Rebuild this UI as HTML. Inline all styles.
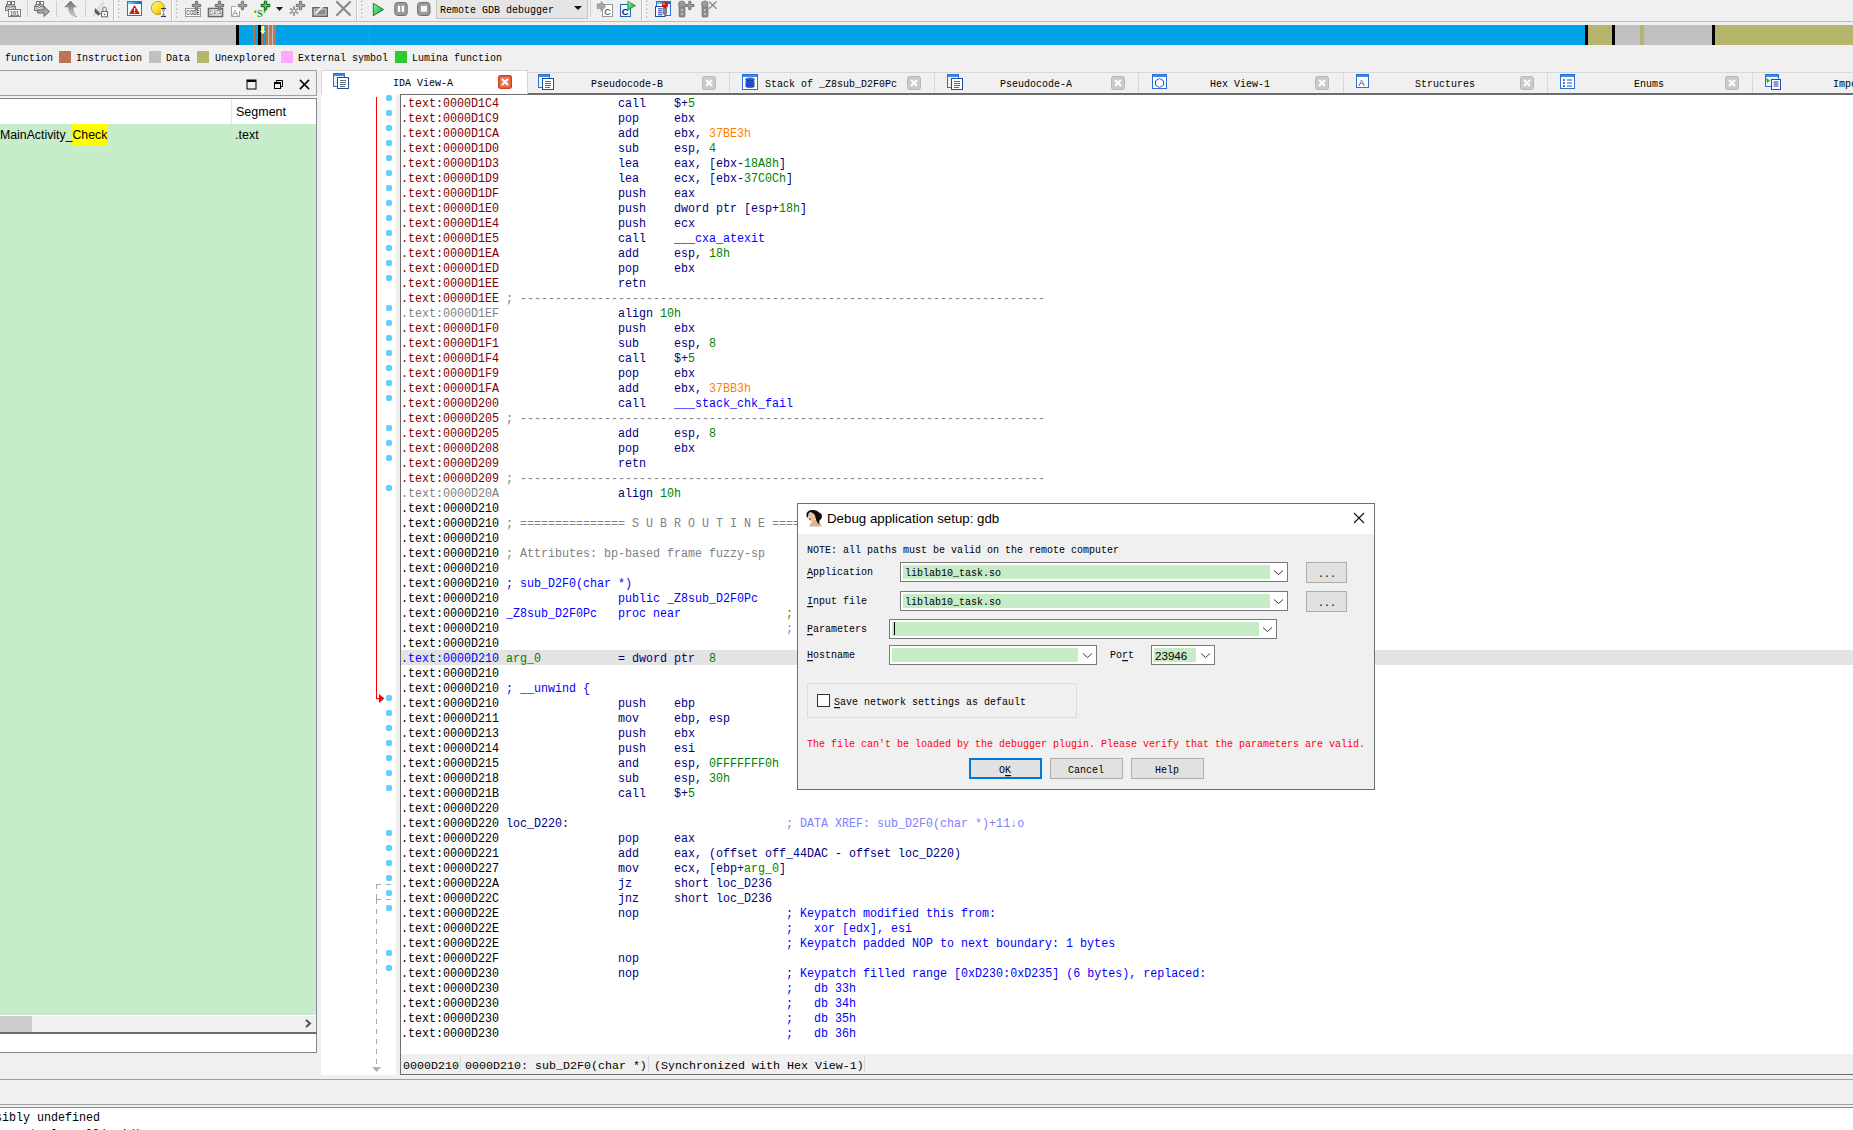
<!DOCTYPE html><html><head><meta charset="utf-8"><style>
*{box-sizing:border-box}
html,body{margin:0;padding:0}
body{width:1853px;height:1130px;overflow:hidden;background:#f0f0f0;position:relative;font-family:'Liberation Sans', sans-serif}
.a{position:absolute}
.ln{position:absolute;left:401.4px;height:15px;line-height:15px;font-family:'Liberation Mono', monospace;font-size:12px;white-space:pre;color:#000;transform:scaleX(0.97222);transform-origin:0 0}
.m10{font-family:'Liberation Mono', monospace;font-size:10px;white-space:pre;position:absolute;line-height:12px;transform:scaleY(1.15);transform-origin:0 9.5px}
.tab{position:absolute;top:72px;height:22px}
.tabtxt{position:absolute;top:78px;font-family:'Liberation Mono', monospace;font-size:10px;line-height:12px;white-space:pre;color:#000;transform:scaleY(1.15);transform-origin:0 9.5px}
.cls{position:absolute;top:75px;width:14px;height:14px;background:#c8c8c8;border:1px solid #b4b4b4;border-radius:2px}
.st{font-size:11.667px;transform:none}
.dot{position:absolute;left:386px;width:6px;height:6px;background:#5fcfff;border-radius:2px}
</style></head><body>
<div class="a" style="left:0;top:21px;width:1853px;height:1px;background:#bdbdbd"></div>
<svg class="a" style="left:0;top:0" width="720" height="21" viewBox="0 0 720 21"><rect x="113" y="0" width="1" height="21" fill="#c4c4c4"/><rect x="114" y="0" width="1" height="21" fill="#fff"/><rect x="171" y="0" width="1" height="21" fill="#c4c4c4"/><rect x="172" y="0" width="1" height="21" fill="#fff"/><rect x="356" y="0" width="1" height="21" fill="#c4c4c4"/><rect x="357" y="0" width="1" height="21" fill="#fff"/><rect x="641" y="0" width="1" height="21" fill="#c4c4c4"/><rect x="642" y="0" width="1" height="21" fill="#fff"/><rect x="27" y="1" width="1" height="16" fill="#cfcfcf"/><rect x="56" y="1" width="1" height="16" fill="#cfcfcf"/><rect x="85" y="1" width="1" height="16" fill="#cfcfcf"/><rect x="590" y="1" width="1" height="16" fill="#cfcfcf"/><path d="M119.5 0.5 L118 2.0" stroke="#a0a0a0" stroke-width="1"/><rect x="119" y="1.5" width="1" height="1" fill="#fff"/><path d="M119.5 4.5 L118 6.0" stroke="#a0a0a0" stroke-width="1"/><rect x="119" y="5.5" width="1" height="1" fill="#fff"/><path d="M119.5 8.5 L118 10.0" stroke="#a0a0a0" stroke-width="1"/><rect x="119" y="9.5" width="1" height="1" fill="#fff"/><path d="M119.5 12.5 L118 14.0" stroke="#a0a0a0" stroke-width="1"/><rect x="119" y="13.5" width="1" height="1" fill="#fff"/><path d="M119.5 16.5 L118 18.0" stroke="#a0a0a0" stroke-width="1"/><rect x="119" y="17.5" width="1" height="1" fill="#fff"/><path d="M177.5 0.5 L176 2.0" stroke="#a0a0a0" stroke-width="1"/><rect x="177" y="1.5" width="1" height="1" fill="#fff"/><path d="M177.5 4.5 L176 6.0" stroke="#a0a0a0" stroke-width="1"/><rect x="177" y="5.5" width="1" height="1" fill="#fff"/><path d="M177.5 8.5 L176 10.0" stroke="#a0a0a0" stroke-width="1"/><rect x="177" y="9.5" width="1" height="1" fill="#fff"/><path d="M177.5 12.5 L176 14.0" stroke="#a0a0a0" stroke-width="1"/><rect x="177" y="13.5" width="1" height="1" fill="#fff"/><path d="M177.5 16.5 L176 18.0" stroke="#a0a0a0" stroke-width="1"/><rect x="177" y="17.5" width="1" height="1" fill="#fff"/><path d="M362.5 0.5 L361 2.0" stroke="#a0a0a0" stroke-width="1"/><rect x="362" y="1.5" width="1" height="1" fill="#fff"/><path d="M362.5 4.5 L361 6.0" stroke="#a0a0a0" stroke-width="1"/><rect x="362" y="5.5" width="1" height="1" fill="#fff"/><path d="M362.5 8.5 L361 10.0" stroke="#a0a0a0" stroke-width="1"/><rect x="362" y="9.5" width="1" height="1" fill="#fff"/><path d="M362.5 12.5 L361 14.0" stroke="#a0a0a0" stroke-width="1"/><rect x="362" y="13.5" width="1" height="1" fill="#fff"/><path d="M362.5 16.5 L361 18.0" stroke="#a0a0a0" stroke-width="1"/><rect x="362" y="17.5" width="1" height="1" fill="#fff"/><path d="M647.5 0.5 L646 2.0" stroke="#a0a0a0" stroke-width="1"/><rect x="647" y="1.5" width="1" height="1" fill="#fff"/><path d="M647.5 4.5 L646 6.0" stroke="#a0a0a0" stroke-width="1"/><rect x="647" y="5.5" width="1" height="1" fill="#fff"/><path d="M647.5 8.5 L646 10.0" stroke="#a0a0a0" stroke-width="1"/><rect x="647" y="9.5" width="1" height="1" fill="#fff"/><path d="M647.5 12.5 L646 14.0" stroke="#a0a0a0" stroke-width="1"/><rect x="647" y="13.5" width="1" height="1" fill="#fff"/><path d="M647.5 16.5 L646 18.0" stroke="#a0a0a0" stroke-width="1"/><rect x="647" y="17.5" width="1" height="1" fill="#fff"/><rect x="7.5" y="1.5" width="3" height="3" fill="#fff" stroke="#7a7a7a"/><rect x="11.5" y="1.5" width="3" height="3" fill="#fff" stroke="#7a7a7a"/><rect x="6.5" y="4.5" width="4" height="2" fill="#c4c4c4" stroke="#7a7a7a"/><rect x="10.5" y="4.5" width="4" height="2" fill="#c4c4c4" stroke="#7a7a7a"/><rect x="5.5" y="6.5" width="5" height="4" fill="#c4c4c4" stroke="#7a7a7a"/><rect x="10.5" y="6.5" width="5" height="4" fill="#c4c4c4" stroke="#7a7a7a"/><rect x="10" y="6" width="1" height="1" fill="#fff"/><rect x="10" y="8" width="1" height="1" fill="#fff"/><rect x="8.5" y="9.5" width="12" height="7" fill="#fff" stroke="#7a7a7a"/><text x="10" y="15.6" font-family="Liberation Sans" font-weight="bold" font-size="6.5" fill="#555" textLength="9" lengthAdjust="spacingAndGlyphs">101</text><rect x="36.5" y="1.5" width="3" height="3" fill="#fff" stroke="#7a7a7a"/><rect x="40.5" y="1.5" width="3" height="3" fill="#fff" stroke="#7a7a7a"/><rect x="35.5" y="4.5" width="4" height="2" fill="#c4c4c4" stroke="#7a7a7a"/><rect x="39.5" y="4.5" width="4" height="2" fill="#c4c4c4" stroke="#7a7a7a"/><rect x="34.5" y="6.5" width="5" height="4" fill="#c4c4c4" stroke="#7a7a7a"/><rect x="39.5" y="6.5" width="5" height="4" fill="#c4c4c4" stroke="#7a7a7a"/><rect x="39" y="6" width="1" height="1" fill="#fff"/><rect x="39" y="8" width="1" height="1" fill="#fff"/><path d="M37.5 10 H44 V6.5 L49.5 11.5 L44 16.5 V13 H37.5Z" fill="#a8a8a8" stroke="#6e6e6e" stroke-width="1"/><defs><linearGradient id="ga" x1="0" y1="0" x2="0" y2="1"><stop offset="0" stop-color="#6a6a6a"/><stop offset="1" stop-color="#d8d8d8"/></linearGradient><linearGradient id="gg" x1="0" y1="0" x2="1" y2="1"><stop offset="0" stop-color="#7fff9f"/><stop offset="1" stop-color="#0a9a2a"/></linearGradient><linearGradient id="gy" x1="0" y1="0" x2="1" y2="1"><stop offset="0" stop-color="#fff7a0"/><stop offset="0.6" stop-color="#ffd820"/><stop offset="1" stop-color="#c08a00"/></linearGradient><linearGradient id="gb" x1="0" y1="0" x2="1" y2="0"><stop offset="0" stop-color="#5ee0ff"/><stop offset="1" stop-color="#2050d0"/></linearGradient></defs><path d="M70.5 1 L76.5 7 H73 C73 11 74 14.5 77 17 C71 16 68.5 12 68.5 7 H64.5Z" fill="url(#ga)" stroke="#5a5a5a" stroke-width="0.6" stroke-dasharray="1 1"/><path d="M92.5 16.5 L96 10 L103 1.5 L104 3 L99 12 Z" fill="#e4e4e4" stroke="#c8c8c8" stroke-width="0.6"/><path d="M95 8 L101 14 L98 15.5 L94.5 12 Z" fill="#5a5a5a"/><rect x="101.5" y="11.5" width="6" height="5.3" fill="#f4f4f4" stroke="#707070"/><path d="M102.8 11.5 V9 A1.7 2 0 0 1 106.2 9 V11.5" fill="none" stroke="#707070" stroke-width="1"/><rect x="104" y="14" width="1" height="1" fill="#333"/><rect x="127.5" y="1.5" width="14" height="14" fill="#f0ffff" stroke="#2a6ee0"/><rect x="128" y="2" width="13" height="2" fill="url(#gb)"/><rect x="128" y="4" width="13" height="0.6" fill="#fff"/><path d="M134.5 5 L140 14 H129Z" fill="#d81818"/><rect x="134" y="8" width="1.2" height="3.2" fill="#fff"/><rect x="134" y="12" width="1.2" height="1.2" fill="#fff"/><circle cx="158" cy="8" r="6.6" fill="url(#gy)" stroke="#b88a00" stroke-width="0.8"/><rect x="161" y="8" width="5" height="9" fill="#fff"/><rect x="161" y="8" width="5" height="1" fill="#1a3a7a"/><rect x="161" y="16" width="5" height="1" fill="#1a3a7a"/><path d="M162 9.5 H165 L163.5 12.5 L165 15.5 H162 L163.5 12.5Z" fill="#e07040" stroke="#6aa0e0" stroke-width="0.5"/><rect x="185.5" y="8.5" width="15" height="8" fill="#fff" stroke="#9a9a9a"/><text x="186.3" y="15.3" font-family="Liberation Sans" font-weight="bold" font-size="6.6" fill="#5a5a5a" textLength="13.4" lengthAdjust="spacingAndGlyphs">CODE</text><path d="M195.4 1.2999999999999998 H197.6 V4.4 H200.7 V6.6 H197.6 V9.7 H195.4 V6.6 H192.3 V4.4 H195.4Z" fill="#a0a0a0" stroke="#6a6a6a" stroke-width="1"/><rect x="208.5" y="8.5" width="14" height="8" fill="#fff" stroke="#6a6a6a" stroke-width="1.6"/><text x="209.6" y="15.3" font-family="Liberation Sans" font-weight="bold" font-size="6.6" fill="#888" textLength="12" lengthAdjust="spacingAndGlyphs">DATA</text><path d="M218.4 1.2999999999999998 H220.6 V4.4 H223.7 V6.6 H220.6 V9.7 H218.4 V6.6 H215.3 V4.4 H218.4Z" fill="#a0a0a0" stroke="#6a6a6a" stroke-width="1"/><path d="M239.5 11 V16.5 H231.5 V6.5 H236" fill="#fff" stroke="#a0a0a0"/><text x="232" y="15.5" font-family="Liberation Sans" font-size="9" fill="#777">A</text><path d="M241.4 1.2999999999999998 H243.6 V4.4 H246.7 V6.6 H243.6 V9.7 H241.4 V6.6 H238.3 V4.4 H241.4Z" fill="#a8a8a8" stroke="#707070" stroke-width="1"/><text x="253.5" y="16.8" font-family="Liberation Serif" font-weight="bold" font-size="10.5" fill="#2a9a1a">‘S’</text><path d="M264.3 1.2000000000000002 H266.7 V4.3 H269.8 V6.7 H266.7 V9.8 H264.3 V6.7 H261.2 V4.3 H264.3Z" fill="#30e040" stroke="#0a5a0a" stroke-width="1"/><path d="M276 7 H283 L279.5 11Z" fill="#1a1a1a"/><g stroke="#9a9a9a" stroke-width="2" stroke-linecap="round"><path d="M294 7 V15"/><path d="M290.5 9 L297.5 13"/><path d="M297.5 9 L290.5 13"/></g><circle cx="294" cy="11" r="1.2" fill="#eee"/><path d="M299.4 1.2999999999999998 H301.6 V4.4 H304.7 V6.6 H301.6 V9.7 H299.4 V6.6 H296.3 V4.4 H299.4Z" fill="#a8a8a8" stroke="#707070" stroke-width="1"/><rect x="313" y="7.8" width="14.2" height="8.4" fill="#fff" stroke="#666" stroke-width="1.6"/><rect x="314.5" y="9.3" width="11.2" height="5.4" fill="#8a8a8a"/><path d="M315.5 13.5 L327 2" stroke="#f8f8f8" stroke-width="2.2"/><path d="M315.5 13.5 L327 2" stroke="#b0b0b0" stroke-width="0.6" stroke-dasharray="1 1"/><path d="M337 2 L350 15 M350 2 L337 15" stroke="#8a8a8a" stroke-width="2.2" stroke-linecap="round"/><path d="M373.3 3.3 L383.5 9.5 L373.3 15.7Z" fill="url(#gg)" stroke="#0a5a10" stroke-width="0.8"/><rect x="394.8" y="2.5" width="12.4" height="13" rx="3" fill="#9a9a9a" stroke="#707070"/><rect x="397.8" y="5.8" width="2.4" height="6" fill="#fff"/><rect x="401.7" y="5.8" width="2.4" height="6" fill="#fff"/><rect x="417.6" y="2.5" width="12.4" height="13" rx="3" fill="#9a9a9a" stroke="#707070"/><rect x="420.8" y="5.8" width="6.2" height="6" fill="#f4f4f4"/><rect x="602.5" y="4.5" width="10" height="12" fill="#fff" stroke="#9a9a9a"/><text x="604.2" y="14.5" font-family="Liberation Sans" font-weight="bold" font-size="9" fill="#6a6a6a">C</text><path d="M597.2 4 H601 V1.2 L605.8 6.3 L601 11.4 V8.6 H597.2Z" fill="#a8a8a8" stroke="#555" stroke-width="0.6" stroke-dasharray="1 0.8"/><rect x="620.5" y="4.5" width="10" height="12" fill="#eef6ff" stroke="#2a60b0"/><text x="621.8" y="14.5" font-family="Liberation Sans" font-weight="bold" font-size="9.5" fill="#0a1a8a">C</text><path d="M627.8 1.2 L635.5 5.6 L627.8 10Z" fill="url(#gg)" stroke="#0a6a10" stroke-width="0.6"/><rect x="656.5" y="1.5" width="14" height="14" fill="#f0ffff" stroke="#2a6ee0"/><rect x="657" y="2" width="13" height="2" fill="url(#gb)"/><rect x="655.5" y="6.5" width="9.5" height="10" fill="#fff" stroke="#1a4a9a"/><path d="M658 8.8 H662.5 M658 10.8 H662.5 M658 12.8 H662.5 M658 14.8 H662.5" stroke="#0a1aa0" stroke-width="0.9"/><rect x="663.6" y="8" width="3" height="6" fill="#888" stroke="#333" stroke-width="0.5"/><circle cx="665" cy="5" r="3" fill="#e01010"/><circle cx="664" cy="4" r="1" fill="#ff9090"/><rect x="679" y="6" width="6" height="11" rx="1" fill="#8a8a8a" stroke="#6a6a6a" stroke-width="0.6"/><circle cx="681.8" cy="4.3" r="3.4" fill="#9a9a9a" stroke="#6a6a6a" stroke-width="0.6"/><circle cx="682" cy="10" r="1.3" fill="#b8b8b8"/><circle cx="682" cy="14" r="1.3" fill="#b8b8b8"/><rect x="702" y="6" width="6" height="11" rx="1" fill="#8a8a8a" stroke="#6a6a6a" stroke-width="0.6"/><circle cx="704.8" cy="4.3" r="3.4" fill="#9a9a9a" stroke="#6a6a6a" stroke-width="0.6"/><circle cx="705" cy="10" r="1.3" fill="#b8b8b8"/><circle cx="705" cy="14" r="1.3" fill="#b8b8b8"/><path d="M688.8 1.4000000000000004 H690.8 V4.5 H693.9 V6.5 H690.8 V9.6 H688.8 V6.5 H685.6999999999999 V4.5 H688.8Z" fill="#a8a8a8" stroke="#707070" stroke-width="1"/><path d="M709 1.5 L716.5 8.8 M716.5 1.5 L709 8.8" stroke="#8a8a8a" stroke-width="1.4"/></svg>
<div class="a" style="left:436px;top:0;width:152px;height:19px;background:#e5e5e5;border:1px solid #c4c4c4;border-top:none"></div>
<div class="m10" style="left:440px;top:5px;color:#000">Remote GDB debugger</div>
<svg class="a" style="left:574px;top:6px" width="9" height="6" viewBox="0 0 9 6"><path d="M0 0 H8 L4 4Z" fill="#111"/></svg>
<div class="a" style="left:0;top:25px;width:1853px;height:20px;background:#00a2e8"></div>
<div class="a" style="left:0px;top:25px;width:236px;height:20px;background:#c0c0c0"></div>
<div class="a" style="left:236px;top:25px;width:3px;height:20px;background:#000"></div>
<div class="a" style="left:253px;top:25px;width:2px;height:20px;background:#c07040"></div>
<div class="a" style="left:257px;top:25px;width:1px;height:20px;background:#c07040"></div>
<div class="a" style="left:258px;top:25px;width:3px;height:20px;background:#000"></div>
<div class="a" style="left:262px;top:25px;width:1px;height:20px;background:#c07040"></div>
<div class="a" style="left:266px;top:25px;width:2px;height:20px;background:#c07040"></div>
<div class="a" style="left:268px;top:25px;width:1px;height:20px;background:#c0c0c0"></div>
<div class="a" style="left:269px;top:25px;width:3px;height:20px;background:#bb7a50"></div>
<div class="a" style="left:272px;top:25px;width:1px;height:20px;background:#c0c0c0"></div>
<div class="a" style="left:273px;top:25px;width:3px;height:20px;background:#bb7a50"></div>
<div class="a" style="left:369px;top:25px;width:1px;height:20px;background:#b07850"></div>
<div class="a" style="left:1585px;top:25px;width:3px;height:20px;background:#000"></div>
<div class="a" style="left:1588px;top:25px;width:24px;height:20px;background:#b5b56b"></div>
<div class="a" style="left:1612px;top:25px;width:3px;height:20px;background:#000"></div>
<div class="a" style="left:1615px;top:25px;width:25px;height:20px;background:#c0c0c0"></div>
<div class="a" style="left:1640px;top:25px;width:4px;height:20px;background:#b5b56b"></div>
<div class="a" style="left:1644px;top:25px;width:68px;height:20px;background:#c0c0c0"></div>
<div class="a" style="left:1712px;top:25px;width:3px;height:20px;background:#000"></div>
<div class="a" style="left:1715px;top:25px;width:138px;height:20px;background:#b5b56b"></div>
<svg class="a" style="left:260px;top:26px" width="6" height="9" viewBox="0 0 6 9"><path d="M1.3 0 H4.3 V5 H5.5 L2.8 8.3 L0 5 H1.3Z" fill="#ffff80"/></svg>
<div class="m10" style="left:5px;top:53px;color:#000">function</div>
<div class="a" style="left:59px;top:51px;width:12px;height:12px;background:#bb7755"></div>
<div class="m10" style="left:76px;top:53px;color:#000">Instruction</div>
<div class="a" style="left:149px;top:51px;width:12px;height:12px;background:#c0c0c0"></div>
<div class="m10" style="left:166px;top:53px;color:#000">Data</div>
<div class="a" style="left:197px;top:51px;width:12px;height:12px;background:#b5b56b"></div>
<div class="m10" style="left:215px;top:53px;color:#000">Unexplored</div>
<div class="a" style="left:281px;top:51px;width:12px;height:12px;background:#ffa8ff"></div>
<div class="m10" style="left:298px;top:53px;color:#000">External symbol</div>
<div class="a" style="left:395px;top:51px;width:12px;height:12px;background:#30c830"></div>
<div class="m10" style="left:412px;top:53px;color:#000">Lumina function</div>
<div class="a" style="left:0;top:70px;width:317px;height:26px;border-top:1px solid #a0a0a0;border-bottom:1px solid #a0a0a0;border-right:1px solid #a0a0a0;background:#f0f0f0"></div>
<svg class="a" style="left:246px;top:79px" width="11" height="11" viewBox="0 0 11 11"><rect x="1" y="1" width="9" height="9" fill="none" stroke="#000" stroke-width="1"/><rect x="1" y="1" width="9" height="2" fill="#000"/></svg>
<svg class="a" style="left:273px;top:79px" width="11" height="11" viewBox="0 0 11 11"><rect x="1.5" y="3.5" width="6" height="6" fill="none" stroke="#000"/><rect x="1" y="3" width="7" height="2" fill="#000"/><path d="M3.5 3 V1.5 H9.5 V7.5 H8" fill="none" stroke="#000"/></svg>
<svg class="a" style="left:299px;top:79px" width="11" height="11" viewBox="0 0 11 11"><path d="M1.5 1.5 L9.5 9.5 M9.5 1.5 L1.5 9.5" stroke="#000" stroke-width="1.6" stroke-linecap="square"/></svg>
<div class="a" style="left:0;top:98px;width:317px;height:955px;border:1px solid #828790;border-left:none;background:#fff"></div>
<div class="a" style="left:0;top:124px;width:316px;height:891px;background:#c6ecc9"></div>
<div class="a" style="left:231px;top:99px;width:1px;height:25px;background:#e5e5e5"></div>
<div class="a" style="left:236px;top:104px;font:12.5px 'Liberation Sans';line-height:16px;color:#000">Segment</div>
<div class="a" style="left:72px;top:124px;width:35px;height:21px;background:#ffff00"></div>
<div class="a" style="left:0;top:127px;font:12.3px 'Liberation Sans';line-height:16px;color:#000">MainActivity_Check</div>
<div class="a" style="left:235px;top:127px;font:12.5px 'Liberation Sans';line-height:16px;color:#000">.text</div>
<div class="a" style="left:0;top:1016px;width:316px;height:16px;background:#f0f0f0"></div>
<div class="a" style="left:0;top:1016px;width:32px;height:16px;background:#cdcdcd"></div>
<div class="a" style="left:0;top:1032px;width:317px;height:2px;background:#6d6d6d"></div>

<svg class="a" style="left:304px;top:1019px" width="9" height="9"><path d="M2 1 L6 4.5 L2 8" stroke="#505050" stroke-width="2" fill="none"/></svg>
<div class="a" style="left:321px;top:72px;width:1532px;height:1px;background:#d8d8d8"></div>
<div class="a" style="left:321px;top:93px;width:1532px;height:2px;background:#6d6d6d"></div>
<div class="a" style="left:321px;top:70px;width:207px;height:25px;background:#fff;border:1px solid #d8d8d8;border-bottom:none"></div>
<svg class="a" style="left:333px;top:73px" width="16" height="16" viewBox="0 0 16 16"><rect x="0.5" y="0.5" width="11" height="13" fill="#e8f2ff" stroke="#2a70d8"/><rect x="1" y="1" width="10" height="2" fill="#3a8ae8"/><rect x="4.5" y="4.5" width="11" height="11" fill="#fff" stroke="#1f4f9a"/><path d="M7 7.5 H13 M7 9.5 H13 M7 11.5 H13 M7 13.5 H12" stroke="#345" stroke-width="0.8"/></svg>
<div class="tabtxt" style="left:393px;top:78px">IDA View-A</div>
<svg class="a" style="left:498px;top:75px" width="14" height="14" viewBox="0 0 14 14"><rect x="0.75" y="0.75" width="12.5" height="12.5" rx="2" fill="#e27850" stroke="#dc3a20" stroke-width="1.5"/><path d="M4 4 L10 10 M10 4 L4 10" stroke="#fff" stroke-width="2"/></svg>
<div class="a" style="left:729px;top:73px;width:1px;height:20px;background:#d8d8d8"></div>
<svg class="a" style="left:538px;top:74px" width="16" height="16" viewBox="0 0 16 16"><rect x="0.5" y="0.5" width="11" height="13" fill="#e8f2ff" stroke="#2a70d8"/><rect x="1" y="1" width="10" height="2" fill="#3a8ae8"/><rect x="4.5" y="4.5" width="11" height="11" fill="#fff" stroke="#1f4f9a"/><path d="M7 7.5 H13 M7 9.5 H13 M7 11.5 H13 M7 13.5 H12" stroke="#345" stroke-width="0.8"/></svg>
<div class="tabtxt" style="left:591px;top:79px">Pseudocode-B</div>
<svg class="a" style="left:702px;top:76px" width="14" height="14" viewBox="0 0 14 14"><rect x="0.5" y="0.5" width="13" height="13" rx="2" fill="#cacaca" stroke="#b8b8b8"/><path d="M4 4 L10 10 M10 4 L4 10" stroke="#fff" stroke-width="2"/></svg>
<div class="a" style="left:934px;top:73px;width:1px;height:20px;background:#d8d8d8"></div>
<svg class="a" style="left:742px;top:74px" width="16" height="16" viewBox="0 0 16 16"><rect x="0.5" y="0.5" width="15" height="15" fill="#fff" stroke="#2a70d8"/><rect x="1" y="1" width="14" height="2" fill="#3a8ae8"/><g fill="#2a5ae0" stroke="#0a2a9a" stroke-width="0.6"><ellipse cx="8" cy="12" rx="4.5" ry="1.5"/><ellipse cx="8" cy="9.8" rx="4.5" ry="1.5"/><ellipse cx="8" cy="7.6" rx="4.5" ry="1.5"/><ellipse cx="8" cy="5.4" rx="4.5" ry="1.5"/></g></svg>
<div class="tabtxt" style="left:765px;top:79px">Stack of _Z8sub_D2F0Pc</div>
<svg class="a" style="left:907px;top:76px" width="14" height="14" viewBox="0 0 14 14"><rect x="0.5" y="0.5" width="13" height="13" rx="2" fill="#cacaca" stroke="#b8b8b8"/><path d="M4 4 L10 10 M10 4 L4 10" stroke="#fff" stroke-width="2"/></svg>
<div class="a" style="left:1138px;top:73px;width:1px;height:20px;background:#d8d8d8"></div>
<svg class="a" style="left:947px;top:74px" width="16" height="16" viewBox="0 0 16 16"><rect x="0.5" y="0.5" width="11" height="13" fill="#e8f2ff" stroke="#2a70d8"/><rect x="1" y="1" width="10" height="2" fill="#3a8ae8"/><rect x="4.5" y="4.5" width="11" height="11" fill="#fff" stroke="#1f4f9a"/><path d="M7 7.5 H13 M7 9.5 H13 M7 11.5 H13 M7 13.5 H12" stroke="#345" stroke-width="0.8"/></svg>
<div class="tabtxt" style="left:1000px;top:79px">Pseudocode-A</div>
<svg class="a" style="left:1111px;top:76px" width="14" height="14" viewBox="0 0 14 14"><rect x="0.5" y="0.5" width="13" height="13" rx="2" fill="#cacaca" stroke="#b8b8b8"/><path d="M4 4 L10 10 M10 4 L4 10" stroke="#fff" stroke-width="2"/></svg>
<div class="a" style="left:1343px;top:73px;width:1px;height:20px;background:#d8d8d8"></div>
<svg class="a" style="left:1152px;top:74px" width="16" height="16" viewBox="0 0 16 16"><rect x="0.5" y="0.5" width="14" height="14" fill="#fff" stroke="#2a70d8"/><rect x="1" y="1" width="13" height="2" fill="#3a8ae8"/><path d="M7.5 4.5 L11.5 6.8 V11.2 L7.5 13.5 L3.5 11.2 V6.8Z" fill="none" stroke="#3050e0" stroke-width="1"/></svg>
<div class="tabtxt" style="left:1210px;top:79px">Hex View-1</div>
<svg class="a" style="left:1315px;top:76px" width="14" height="14" viewBox="0 0 14 14"><rect x="0.5" y="0.5" width="13" height="13" rx="2" fill="#cacaca" stroke="#b8b8b8"/><path d="M4 4 L10 10 M10 4 L4 10" stroke="#fff" stroke-width="2"/></svg>
<div class="a" style="left:1547px;top:73px;width:1px;height:20px;background:#d8d8d8"></div>
<svg class="a" style="left:1356px;top:74px" width="16" height="16" viewBox="0 0 16 16"><rect x="0.5" y="0.5" width="12" height="13" fill="#fff" stroke="#2a70d8"/><rect x="1" y="1" width="11" height="2" fill="#3a8ae8"/><text x="2.5" y="12" font-size="9" font-family="Liberation Sans" fill="#1a3a9a">A</text></svg>
<div class="tabtxt" style="left:1415px;top:79px">Structures</div>
<svg class="a" style="left:1520px;top:76px" width="14" height="14" viewBox="0 0 14 14"><rect x="0.5" y="0.5" width="13" height="13" rx="2" fill="#cacaca" stroke="#b8b8b8"/><path d="M4 4 L10 10 M10 4 L4 10" stroke="#fff" stroke-width="2"/></svg>
<div class="a" style="left:1752px;top:73px;width:1px;height:20px;background:#d8d8d8"></div>
<svg class="a" style="left:1560px;top:74px" width="16" height="16" viewBox="0 0 16 16"><rect x="0.5" y="0.5" width="14" height="14" fill="#fff" stroke="#2a70d8"/><rect x="1" y="1" width="13" height="2" fill="#3a8ae8"/><path d="M3 6 H5 M3 9 H5 M3 12 H5" stroke="#2050c0" stroke-width="1.5"/><path d="M7 6 H12 M7 9 H12 M7 12 H12" stroke="#2050c0" stroke-width="1"/></svg>
<div class="tabtxt" style="left:1634px;top:79px">Enums</div>
<svg class="a" style="left:1725px;top:76px" width="14" height="14" viewBox="0 0 14 14"><rect x="0.5" y="0.5" width="13" height="13" rx="2" fill="#cacaca" stroke="#b8b8b8"/><path d="M4 4 L10 10 M10 4 L4 10" stroke="#fff" stroke-width="2"/></svg>
<div class="a" style="left:1956px;top:73px;width:1px;height:20px;background:#d8d8d8"></div>
<svg class="a" style="left:1765px;top:74px" width="16" height="16" viewBox="0 0 16 16"><rect x="0.5" y="0.5" width="13" height="12" fill="#eef6ff" stroke="#2a70d8"/><rect x="1" y="1" width="12" height="2" fill="#3a8ae8"/><rect x="6.5" y="5.5" width="9" height="10" fill="#fff" stroke="#1f4f9a"/><path d="M8.5 8 H13.5 M8.5 10 H13.5 M8.5 12 H13.5" stroke="#2030c0" stroke-width="1"/><path d="M1 4 L5 6.5 L2 9Z" fill="#20b020"/></svg>
<div class="tabtxt" style="left:1833px;top:79px">Imports</div>
<div class="a" style="left:321px;top:95px;width:75px;height:980px;background:#fff"></div>
<div class="a" style="left:400px;top:94px;width:1453px;height:981px;border-left:1px solid #6d6d6d;border-top:1px solid #6d6d6d;border-bottom:1px solid #6d6d6d;background:#fff"></div>
<div class="a" style="left:401px;top:650px;width:1452px;height:15px;background:#e3e3e3"></div>

<div class="ln" style="top:97px"><span style="color:#800000">.text:0000D1C4</span>                 <span style="color:#000080">call</span>    <span style="color:#000080">$+</span><span style="color:#008000">5</span></div>
<div class="ln" style="top:112px"><span style="color:#800000">.text:0000D1C9</span>                 <span style="color:#000080">pop</span>     <span style="color:#000080">ebx</span></div>
<div class="ln" style="top:127px"><span style="color:#800000">.text:0000D1CA</span>                 <span style="color:#000080">add</span>     <span style="color:#000080">ebx, </span><span style="color:#ff8000">37BE3h</span></div>
<div class="ln" style="top:142px"><span style="color:#800000">.text:0000D1D0</span>                 <span style="color:#000080">sub</span>     <span style="color:#000080">esp, </span><span style="color:#008000">4</span></div>
<div class="ln" style="top:157px"><span style="color:#800000">.text:0000D1D3</span>                 <span style="color:#000080">lea</span>     <span style="color:#000080">eax, [ebx-</span><span style="color:#008000">18A8h</span><span style="color:#000080">]</span></div>
<div class="ln" style="top:172px"><span style="color:#800000">.text:0000D1D9</span>                 <span style="color:#000080">lea</span>     <span style="color:#000080">ecx, [ebx-</span><span style="color:#008000">37C0Ch</span><span style="color:#000080">]</span></div>
<div class="ln" style="top:187px"><span style="color:#800000">.text:0000D1DF</span>                 <span style="color:#000080">push</span>    <span style="color:#000080">eax</span></div>
<div class="ln" style="top:202px"><span style="color:#800000">.text:0000D1E0</span>                 <span style="color:#000080">push</span>    <span style="color:#000080">dword ptr [esp+</span><span style="color:#008000">18h</span><span style="color:#000080">]</span></div>
<div class="ln" style="top:217px"><span style="color:#800000">.text:0000D1E4</span>                 <span style="color:#000080">push</span>    <span style="color:#000080">ecx</span></div>
<div class="ln" style="top:232px"><span style="color:#800000">.text:0000D1E5</span>                 <span style="color:#000080">call</span>    <span style="color:#0000ff">___cxa_atexit</span></div>
<div class="ln" style="top:247px"><span style="color:#800000">.text:0000D1EA</span>                 <span style="color:#000080">add</span>     <span style="color:#000080">esp, </span><span style="color:#008000">18h</span></div>
<div class="ln" style="top:262px"><span style="color:#800000">.text:0000D1ED</span>                 <span style="color:#000080">pop</span>     <span style="color:#000080">ebx</span></div>
<div class="ln" style="top:277px"><span style="color:#800000">.text:0000D1EE</span>                 <span style="color:#000080">retn</span></div>
<div class="ln" style="top:292px"><span style="color:#800000">.text:0000D1EE</span> <span style="color:#808080">; ---------------------------------------------------------------------------</span></div>
<div class="ln" style="top:307px"><span style="color:#808080">.text:0000D1EF</span>                 <span style="color:#000080">align </span><span style="color:#008000">10h</span></div>
<div class="ln" style="top:322px"><span style="color:#800000">.text:0000D1F0</span>                 <span style="color:#000080">push</span>    <span style="color:#000080">ebx</span></div>
<div class="ln" style="top:337px"><span style="color:#800000">.text:0000D1F1</span>                 <span style="color:#000080">sub</span>     <span style="color:#000080">esp, </span><span style="color:#008000">8</span></div>
<div class="ln" style="top:352px"><span style="color:#800000">.text:0000D1F4</span>                 <span style="color:#000080">call</span>    <span style="color:#000080">$+</span><span style="color:#008000">5</span></div>
<div class="ln" style="top:367px"><span style="color:#800000">.text:0000D1F9</span>                 <span style="color:#000080">pop</span>     <span style="color:#000080">ebx</span></div>
<div class="ln" style="top:382px"><span style="color:#800000">.text:0000D1FA</span>                 <span style="color:#000080">add</span>     <span style="color:#000080">ebx, </span><span style="color:#ff8000">37BB3h</span></div>
<div class="ln" style="top:397px"><span style="color:#800000">.text:0000D200</span>                 <span style="color:#000080">call</span>    <span style="color:#0000ff">___stack_chk_fail</span></div>
<div class="ln" style="top:412px"><span style="color:#800000">.text:0000D205</span> <span style="color:#808080">; ---------------------------------------------------------------------------</span></div>
<div class="ln" style="top:427px"><span style="color:#800000">.text:0000D205</span>                 <span style="color:#000080">add</span>     <span style="color:#000080">esp, </span><span style="color:#008000">8</span></div>
<div class="ln" style="top:442px"><span style="color:#800000">.text:0000D208</span>                 <span style="color:#000080">pop</span>     <span style="color:#000080">ebx</span></div>
<div class="ln" style="top:457px"><span style="color:#800000">.text:0000D209</span>                 <span style="color:#000080">retn</span></div>
<div class="ln" style="top:472px"><span style="color:#800000">.text:0000D209</span> <span style="color:#808080">; ---------------------------------------------------------------------------</span></div>
<div class="ln" style="top:487px"><span style="color:#808080">.text:0000D20A</span>                 <span style="color:#000080">align </span><span style="color:#008000">10h</span></div>
<div class="ln" style="top:502px"><span style="color:#000000">.text:0000D210</span></div>
<div class="ln" style="top:517px"><span style="color:#000000">.text:0000D210</span> <span style="color:#808080">; =============== S U B R O U T I N E =======================================</span></div>
<div class="ln" style="top:532px"><span style="color:#000000">.text:0000D210</span></div>
<div class="ln" style="top:547px"><span style="color:#000000">.text:0000D210</span> <span style="color:#808080">; Attributes: bp-based frame fuzzy-sp</span></div>
<div class="ln" style="top:562px"><span style="color:#000000">.text:0000D210</span></div>
<div class="ln" style="top:577px"><span style="color:#000000">.text:0000D210</span> <span style="color:#0000ff">; sub_D2F0(char *)</span></div>
<div class="ln" style="top:592px"><span style="color:#000000">.text:0000D210</span>                 <span style="color:#0000ff">public _Z8sub_D2F0Pc</span></div>
<div class="ln" style="top:607px"><span style="color:#000000">.text:0000D210</span> <span style="color:#0000ff">_Z8sub_D2F0Pc   proc near</span>               <span style="color:#808000">;</span></div>
<div class="ln" style="top:622px"><span style="color:#000000">.text:0000D210</span>                                         <span style="color:#8080ff">;</span></div>
<div class="ln" style="top:637px"><span style="color:#000000">.text:0000D210</span></div>
<div class="ln" style="top:652px"><span style="color:#0000ff">.text:0000D210</span> <span style="color:#008000">arg_0</span>           <span style="color:#000080">= dword ptr  </span><span style="color:#008000">8</span></div>
<div class="ln" style="top:667px"><span style="color:#000000">.text:0000D210</span></div>
<div class="ln" style="top:682px"><span style="color:#000000">.text:0000D210</span> <span style="color:#0000ff">; __unwind {</span></div>
<div class="ln" style="top:697px"><span style="color:#000000">.text:0000D210</span>                 <span style="color:#000080">push</span>    <span style="color:#000080">ebp</span></div>
<div class="ln" style="top:712px"><span style="color:#000000">.text:0000D211</span>                 <span style="color:#000080">mov</span>     <span style="color:#000080">ebp, esp</span></div>
<div class="ln" style="top:727px"><span style="color:#000000">.text:0000D213</span>                 <span style="color:#000080">push</span>    <span style="color:#000080">ebx</span></div>
<div class="ln" style="top:742px"><span style="color:#000000">.text:0000D214</span>                 <span style="color:#000080">push</span>    <span style="color:#000080">esi</span></div>
<div class="ln" style="top:757px"><span style="color:#000000">.text:0000D215</span>                 <span style="color:#000080">and</span>     <span style="color:#000080">esp, </span><span style="color:#008000">0FFFFFFF0h</span></div>
<div class="ln" style="top:772px"><span style="color:#000000">.text:0000D218</span>                 <span style="color:#000080">sub</span>     <span style="color:#000080">esp, </span><span style="color:#008000">30h</span></div>
<div class="ln" style="top:787px"><span style="color:#000000">.text:0000D21B</span>                 <span style="color:#000080">call</span>    <span style="color:#000080">$+</span><span style="color:#008000">5</span></div>
<div class="ln" style="top:802px"><span style="color:#000000">.text:0000D220</span></div>
<div class="ln" style="top:817px"><span style="color:#000000">.text:0000D220</span> <span style="color:#000080">loc_D220:</span>                               <span style="color:#8080ff">; DATA XREF: sub_D2F0(char *)+11↓o</span></div>
<div class="ln" style="top:832px"><span style="color:#000000">.text:0000D220</span>                 <span style="color:#000080">pop</span>     <span style="color:#000080">eax</span></div>
<div class="ln" style="top:847px"><span style="color:#000000">.text:0000D221</span>                 <span style="color:#000080">add</span>     <span style="color:#000080">eax, (offset off_44DAC - offset loc_D220)</span></div>
<div class="ln" style="top:862px"><span style="color:#000000">.text:0000D227</span>                 <span style="color:#000080">mov</span>     <span style="color:#000080">ecx, [ebp+</span><span style="color:#008000">arg_0</span><span style="color:#000080">]</span></div>
<div class="ln" style="top:877px"><span style="color:#000000">.text:0000D22A</span>                 <span style="color:#000080">jz</span>      <span style="color:#000080">short loc_D236</span></div>
<div class="ln" style="top:892px"><span style="color:#000000">.text:0000D22C</span>                 <span style="color:#000080">jnz</span>     <span style="color:#000080">short loc_D236</span></div>
<div class="ln" style="top:907px"><span style="color:#000000">.text:0000D22E</span>                 <span style="color:#000080">nop</span>                     <span style="color:#0000ff">; Keypatch modified this from:</span></div>
<div class="ln" style="top:922px"><span style="color:#000000">.text:0000D22E</span>                                         <span style="color:#0000ff">;   xor [edx], esi</span></div>
<div class="ln" style="top:937px"><span style="color:#000000">.text:0000D22E</span>                                         <span style="color:#0000ff">; Keypatch padded NOP to next boundary: 1 bytes</span></div>
<div class="ln" style="top:952px"><span style="color:#000000">.text:0000D22F</span>                 <span style="color:#000080">nop</span></div>
<div class="ln" style="top:967px"><span style="color:#000000">.text:0000D230</span>                 <span style="color:#000080">nop</span>                     <span style="color:#0000ff">; Keypatch filled range [0xD230:0xD235] (6 bytes), replaced:</span></div>
<div class="ln" style="top:982px"><span style="color:#000000">.text:0000D230</span>                                         <span style="color:#0000ff">;   db 33h</span></div>
<div class="ln" style="top:997px"><span style="color:#000000">.text:0000D230</span>                                         <span style="color:#0000ff">;   db 34h</span></div>
<div class="ln" style="top:1012px"><span style="color:#000000">.text:0000D230</span>                                         <span style="color:#0000ff">;   db 35h</span></div>
<div class="ln" style="top:1027px"><span style="color:#000000">.text:0000D230</span>                                         <span style="color:#0000ff">;   db 36h</span></div>
<div class="dot" style="top:95px"></div>
<div class="dot" style="top:110px"></div>
<div class="dot" style="top:125px"></div>
<div class="dot" style="top:140px"></div>
<div class="dot" style="top:155px"></div>
<div class="dot" style="top:170px"></div>
<div class="dot" style="top:185px"></div>
<div class="dot" style="top:200px"></div>
<div class="dot" style="top:215px"></div>
<div class="dot" style="top:230px"></div>
<div class="dot" style="top:245px"></div>
<div class="dot" style="top:260px"></div>
<div class="dot" style="top:275px"></div>
<div class="dot" style="top:305px"></div>
<div class="dot" style="top:320px"></div>
<div class="dot" style="top:335px"></div>
<div class="dot" style="top:350px"></div>
<div class="dot" style="top:365px"></div>
<div class="dot" style="top:380px"></div>
<div class="dot" style="top:395px"></div>
<div class="dot" style="top:425px"></div>
<div class="dot" style="top:440px"></div>
<div class="dot" style="top:455px"></div>
<div class="dot" style="top:485px"></div>
<div class="dot" style="top:695px"></div>
<div class="dot" style="top:710px"></div>
<div class="dot" style="top:725px"></div>
<div class="dot" style="top:740px"></div>
<div class="dot" style="top:755px"></div>
<div class="dot" style="top:770px"></div>
<div class="dot" style="top:785px"></div>
<div class="dot" style="top:830px"></div>
<div class="dot" style="top:845px"></div>
<div class="dot" style="top:860px"></div>
<div class="dot" style="top:875px"></div>
<div class="dot" style="top:890px"></div>
<div class="dot" style="top:905px"></div>
<div class="dot" style="top:950px"></div>
<div class="dot" style="top:965px"></div>
<div class="a" style="left:396px;top:94px;width:4px;height:981px;background:#f0f0f0"></div>
<div class="a" style="left:376px;top:97px;width:1px;height:602px;background:#ff0000"></div>
<svg class="a" style="left:376px;top:693px" width="9" height="11" viewBox="0 0 9 11"><rect x="0" y="5" width="4" height="1.2" fill="#f00"/><path d="M3 1 L8.5 5.5 L3 10Z" fill="#f00"/></svg>
<svg class="a" style="left:376px;top:884px" width="1" height="183"><path d="M0.5 0 V15" stroke="#a8a8a8" stroke-dasharray="5 5" stroke-width="1"/><path d="M0.5 15 V183" stroke="#a8a8a8" stroke-dasharray="5 5" stroke-width="1"/></svg>
<div class="a" style="left:376px;top:884px;width:5px;height:1px;background:#a8a8a8"></div><div class="a" style="left:386px;top:884px;width:5px;height:1px;background:#a8a8a8"></div>
<div class="a" style="left:376px;top:899px;width:5px;height:1px;background:#a8a8a8"></div><div class="a" style="left:386px;top:899px;width:5px;height:1px;background:#a8a8a8"></div>
<svg class="a" style="left:372px;top:1067px" width="9" height="6" viewBox="0 0 9 6"><path d="M0 0 H9 L4.5 5Z" fill="#b0b0b0"/></svg>
<div class="a" style="left:401px;top:1054px;width:1452px;height:20px;background:#f0f0f0"></div>
<div class="ln st" style="left:403px;top:1059px;color:#000">0000D210</div>
<div class="a" style="left:460px;top:1056px;width:1px;height:16px;background:#d8d8d8"></div>
<div class="ln st" style="left:465px;top:1059px;color:#000">0000D210: sub_D2F0(char *)</div>
<div class="a" style="left:648px;top:1056px;width:1px;height:16px;background:#d8d8d8"></div>
<div class="ln st" style="left:654px;top:1059px;color:#000">(Synchronized with Hex View-1)</div>
<div class="a" style="left:864px;top:1056px;width:1px;height:16px;background:#d8d8d8"></div>

<div class="a" style="left:0;top:1079px;width:1853px;height:1px;background:#a0a0a0"></div>
<div class="a" style="left:0;top:1104px;width:1853px;height:1px;background:#a0a0a0"></div>
<div class="a" style="left:0;top:1107px;width:1853px;height:1px;background:#828790"></div>
<div class="a" style="left:0;top:1108px;width:1853px;height:22px;background:#fff"></div>
<div class="ln" style="left:-5px;top:1111px;color:#000">sibly undefined</div>
<div class="ln" style="left:-5px;top:1128px;color:#000">tnxxatnnlnmnnll(void)</div>

<div class="a" style="left:797px;top:503px;width:578px;height:287px;border:1px solid #6e6e6e;background:#f0f0f0"></div>
<div class="a" style="left:798px;top:504px;width:576px;height:30px;background:#fff"></div>
<svg class="a" style="left:806px;top:509px" width="17" height="18" viewBox="0 0 17 18"><path d="M3 17.5 C4 15 6 13 7 11 L12 11 C13 13 15 15.5 16 17.5 Z" fill="#d8b898"/><ellipse cx="5.8" cy="7.8" rx="3.6" ry="4.6" fill="#e4c4a4"/><path d="M0.5 5 C1 1.5 5 0.5 8 1 C11 1.5 12.5 3 14 4 C16.5 5 16.5 9.5 14.5 10.5 C13.5 11.5 12.5 12.5 13.5 15 L12.5 15 C10.5 12.5 9.2 9.5 9.2 7 C8.5 5 6.5 3.2 4.5 3.2 C3 3.2 2.3 4.5 2.3 6.5 L1.5 9 C0.5 8 0.3 6 0.5 5Z" fill="#140c08"/><circle cx="3.8" cy="10.2" r="0.9" fill="#b04030"/></svg>
<div class="a" style="left:827px;top:511px;font-family:'Liberation Sans';font-size:13.3px;line-height:16px;white-space:pre;color:#000">Debug application setup: gdb</div>
<svg class="a" style="left:1353px;top:512px" width="12" height="12" viewBox="0 0 12 12"><path d="M1 1 L11 11 M11 1 L1 11" stroke="#111" stroke-width="1.1"/></svg>
<div class="m10" style="left:807px;top:545px;color:#000">NOTE: all paths must be valid on the remote computer</div>
<div class="m10" style="left:807px;top:567px;color:#000"><u style="text-underline-offset:2px">A</u>pplication</div>
<div class="a" style="left:900px;top:562px;width:388px;height:20px;background:#fff;border:1px solid #7a7a7a"></div>
<div class="a" style="left:903px;top:565px;width:367px;height:14px;background:#c6ebc6"></div>
<svg class="a" style="left:1273px;top:569px" width="11" height="7" viewBox="0 0 11 7"><path d="M1 1.5 L5.5 5.5 L10 1.5" stroke="#222" stroke-width="0.9" fill="none"/></svg>
<div class="a" style="left:905px;top:568px;font-family:'Liberation Mono', monospace;font-size:10px;line-height:12px;white-space:pre;color:#000">liblab10_task.so</div>
<div class="a" style="left:1306px;top:562px;width:41px;height:21px;background:#e1e1e1;border:1px solid #adadad"></div>
<div class="m10" style="left:1318px;top:569px;color:#000">...</div>
<div class="m10" style="left:807px;top:596px;color:#000"><u style="text-underline-offset:2px">I</u>nput file</div>
<div class="a" style="left:900px;top:591px;width:388px;height:20px;background:#fff;border:1px solid #7a7a7a"></div>
<div class="a" style="left:903px;top:594px;width:367px;height:14px;background:#c6ebc6"></div>
<svg class="a" style="left:1273px;top:598px" width="11" height="7" viewBox="0 0 11 7"><path d="M1 1.5 L5.5 5.5 L10 1.5" stroke="#222" stroke-width="0.9" fill="none"/></svg>
<div class="a" style="left:905px;top:597px;font-family:'Liberation Mono', monospace;font-size:10px;line-height:12px;white-space:pre;color:#000">liblab10_task.so</div>
<div class="a" style="left:1306px;top:591px;width:41px;height:21px;background:#e1e1e1;border:1px solid #adadad"></div>
<div class="m10" style="left:1318px;top:598px;color:#000">...</div>
<div class="m10" style="left:807px;top:624px;color:#000"><u style="text-underline-offset:2px">P</u>arameters</div>
<div class="a" style="left:889px;top:619px;width:388px;height:20px;background:#fff;border:1px solid #7a7a7a"></div>
<div class="a" style="left:892px;top:622px;width:367px;height:14px;background:#c6ebc6"></div>
<svg class="a" style="left:1262px;top:626px" width="11" height="7" viewBox="0 0 11 7"><path d="M1 1.5 L5.5 5.5 L10 1.5" stroke="#222" stroke-width="0.9" fill="none"/></svg>
<div class="a" style="left:894px;top:622px;width:1px;height:13px;background:#000"></div>
<div class="m10" style="left:807px;top:650px;color:#000"><u style="text-underline-offset:2px">H</u>ostname</div>
<div class="a" style="left:889px;top:645px;width:208px;height:20px;background:#fff;border:1px solid #7a7a7a"></div>
<div class="a" style="left:892px;top:648px;width:186px;height:14px;background:#c6ebc6"></div>
<svg class="a" style="left:1082px;top:652px" width="11" height="7" viewBox="0 0 11 7"><path d="M1 1.5 L5.5 5.5 L10 1.5" stroke="#222" stroke-width="0.9" fill="none"/></svg>
<div class="m10" style="left:1110px;top:650px;color:#000">Po<u style="text-underline-offset:2px">r</u>t</div>
<div class="a" style="left:1151px;top:645px;width:64px;height:20px;background:#fff;border:1px solid #7a7a7a"></div>
<div class="a" style="left:1154px;top:648px;width:42px;height:14px;background:#c6ebc6"></div>
<svg class="a" style="left:1200px;top:652px" width="11" height="7" viewBox="0 0 11 7"><path d="M1 1.5 L5.5 5.5 L10 1.5" stroke="#222" stroke-width="0.9" fill="none"/></svg>
<div class="a" style="left:1156px;top:650px;font-family:'Liberation Sans';font-size:11.6px;margin-left:-1px;line-height:12px;white-space:pre;color:#000">23946</div>
<div class="a" style="left:807px;top:683px;width:270px;height:35px;border:1px solid #dcdcdc"></div>
<div class="a" style="left:817px;top:694px;width:13px;height:13px;background:#fff;border:1px solid #333"></div>
<div class="m10" style="left:834px;top:697px;color:#000"><u style="text-underline-offset:2px">S</u>ave network settings as default</div>
<div class="m10" style="left:807px;top:739px;color:#ff0000">The file can't be loaded by the debugger plugin. Please verify that the parameters are valid.</div>
<div class="a" style="left:969px;top:758px;width:73px;height:21px;background:#e1e1e1;border:2px solid #0078d7"></div>
<div class="m10" style="left:999px;top:765px;color:#000">O<u style="text-underline-offset:2px">K</u></div>
<div class="a" style="left:1050px;top:758px;width:73px;height:21px;background:#e1e1e1;border:1px solid #adadad"></div>
<div class="m10" style="left:1068px;top:765px;color:#000">Cancel</div>
<div class="a" style="left:1131px;top:758px;width:73px;height:21px;background:#e1e1e1;border:1px solid #adadad"></div>
<div class="m10" style="left:1155px;top:765px;color:#000">Help</div>
</body></html>
